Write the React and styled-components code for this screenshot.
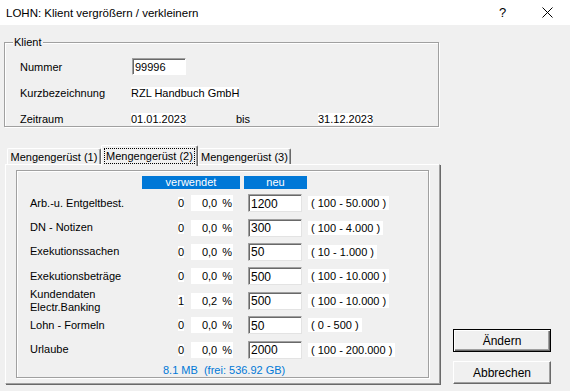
import React from "react";
import styled, { createGlobalStyle } from "styled-components";

const GlobalStyle = createGlobalStyle`
  html, body {
    margin: 0;
    padding: 0;
    background: #f0f0f0;
  }
  body {
    font-family: "Liberation Sans", Arial, sans-serif;
    font-size: 11px;
    color: #000;
  }
`;

const rows = [
  { label: "Arb.-u. Entgeltbest.", count: "0", pct: "0,0", neu: "1200", range: "( 100 - 50.000 )" },
  { label: "DN - Notizen", count: "0", pct: "0,0", neu: "300", range: "( 100 - 4.000 )" },
  { label: "Exekutionssachen", count: "0", pct: "0,0", neu: "50", range: "( 10 - 1.000 )" },
  { label: "Exekutionsbeträge", count: "0", pct: "0,0", neu: "500", range: "( 100 - 10.000 )" },
  { label: "Kundendaten\nElectr.Banking", count: "1", pct: "0,2", neu: "500", range: "( 100 - 10.000 )" },
  { label: "Lohn - Formeln", count: "0", pct: "0,0", neu: "50", range: "( 0 - 500 )" },
  { label: "Urlaube", count: "0", pct: "0,0", neu: "2000", range: "( 100 - 200.000 )" },
];

const App = () => {
  return (
    <Window>
      <GlobalStyle />
      <TitleBar>
        <Title>LOHN: Klient vergrößern / verkleinern</Title>
        <TitleButton>?</TitleButton>
        <TitleButton>
          <svg width="11" height="11" viewBox="0 0 11 11">
            <path d="M0.5 0.5 L10.5 10.5 M10.5 0.5 L0.5 10.5" stroke="#000" strokeWidth="1" />
          </svg>
        </TitleButton>
      </TitleBar>
      <Body>
        <LeftColumn>
          <Group>
            <Legend>Klient</Legend>
            <ClientGrid>
              <FieldLabel>Nummer</FieldLabel>
              <SmallInput defaultValue="99996" />
              <FieldLabel>Kurzbezeichnung</FieldLabel>
              <ValueCell $span={3}>
                <Highlight>RZL Handbuch GmbH</Highlight>
              </ValueCell>
              <FieldLabel>Zeitraum</FieldLabel>
              <ValueCell>
                <Highlight>01.01.2023</Highlight>
              </ValueCell>
              <ValueCell>bis</ValueCell>
              <ValueCell>
                <Highlight>31.12.2023</Highlight>
              </ValueCell>
            </ClientGrid>
          </Group>

          <Tabs>
            <TabStrip>
              <Tab $w={94}>Mengengerüst (1)</Tab>
              <Tab $w={97} $active>
                <Focus>Mengengerüst (2)</Focus>
              </Tab>
              <Tab $w={93}>Mengengerüst (3)</Tab>
            </TabStrip>
            <TabPanel>
              <InnerFrame>
                <HeaderRow>
                  <HeaderCell $w={98}>verwendet</HeaderCell>
                  <HeaderCell $w={63}>neu</HeaderCell>
                </HeaderRow>
                <DataGrid>
                  {rows.map((r) => (
                    <React.Fragment key={r.label}>
                      <RowLabel>{r.label}</RowLabel>
                      <CountCell>
                        <Highlight>{r.count}</Highlight>
                      </CountCell>
                      <PctBox>
                        <span>{r.pct}</span>
                        <Percent>%</Percent>
                      </PctBox>
                      <NewInput defaultValue={r.neu} />
                      <RangeCell>
                        <RangeText>{r.range}</RangeText>
                      </RangeCell>
                    </React.Fragment>
                  ))}
                </DataGrid>
                <Footer>8.1 MB&nbsp;&nbsp;(frei: 536.92 GB)</Footer>
              </InnerFrame>
            </TabPanel>
          </Tabs>
        </LeftColumn>

        <ButtonColumn>
          <Button $default>Ändern</Button>
          <Button>Abbrechen</Button>
        </ButtonColumn>
      </Body>
    </Window>
  );
};

const Window = styled.div`
  width: 570px;
  height: 391px;
  display: flex;
  flex-direction: column;
  background: #f0f0f0;
  overflow: hidden;
`;

const TitleBar = styled.div`
  height: 25px;
  flex-shrink: 0;
  background: #fff;
  display: flex;
  align-items: center;
  padding-left: 6px;
  font-size: 11.5px;
`;

const Title = styled.div`
  flex: 1;
`;

const TitleButton = styled.div`
  width: 45px;
  height: 25px;
  display: flex;
  align-items: center;
  justify-content: center;
  font-size: 13px;
`;

const Body = styled.div`
  flex: 1;
  display: flex;
  padding: 0 0 7px 4px;
`;

const LeftColumn = styled.div`
  width: 436px;
  display: flex;
  flex-direction: column;
`;

const Group = styled.div`
  position: relative;
  width: 435px;
  height: 85px;
  box-sizing: border-box;
  margin-top: 17px;
  padding: 15px 0 0 15px;
  border: 1px solid #a0a0a0;
  box-shadow: inset 1px 1px #fff, 1px 1px #fff;
`;

const Legend = styled.span`
  position: absolute;
  left: 8px;
  top: -7px;
  padding: 0 1px;
  line-height: 13px;
  background: #f0f0f0;
`;

const ClientGrid = styled.div`
  display: grid;
  grid-template-columns: 111px 105px 82px auto;
  grid-template-rows: 17px 17px 17px;
  row-gap: 9px;
  align-items: center;
`;

const FieldLabel = styled.div`
  grid-column: 1;
`;

const ValueCell = styled.div`
  grid-column: ${(p) => (p.$span ? `span ${p.$span}` : "auto")};
`;

const Highlight = styled.span`
  background: #fff;
`;

const SmallInput = styled.input`
  grid-column: 2;
  width: 54px;
  height: 17px;
  box-sizing: border-box;
  margin: 0 0 0 1px;
  padding: 0 2px;
  font: inherit;
  background: #fff;
  border: 1px solid;
  border-color: #a0a0a0 #fff #fff #a0a0a0;
  box-shadow: inset 1px 1px #696969;
  outline: none;
`;

const Tabs = styled.div`
  margin: 18px 0 0 1px;
  flex: 1;
  display: flex;
  flex-direction: column;
`;

const TabStrip = styled.div`
  height: 19px;
  display: flex;
  align-items: flex-end;
  padding-left: 2px;
  position: relative;
  z-index: 1;
`;

const Tab = styled.div`
  width: ${(p) => p.$w}px;
  height: ${(p) => (p.$active ? 21 : 16)}px;
  box-sizing: border-box;
  margin-bottom: ${(p) => (p.$active ? -2 : 0)}px;
  background: #f0f0f0;
  border-top: 1px solid #fff;
  border-left: 1px solid #fff;
  border-right: 1px solid #696969;
  box-shadow: inset -1px 0 #a0a0a0;
  border-radius: 2px 2px 0 0;
  display: flex;
  align-items: ${(p) => (p.$active ? "flex-start" : "center")};
  padding-top: ${(p) => (p.$active ? 2 : 0)}px;
  justify-content: center;
  white-space: nowrap;
`;

const Focus = styled.span`
  border: 1px dotted #000;
  padding: 0 1px;
  line-height: 14px;
`;

const TabPanel = styled.div`
  flex: 1;
  display: flex;
  box-sizing: border-box;
  width: 435px;
  padding: 5px 10px 5px 10px;
  border-top: 1px solid #fff;
  border-left: 1px solid #fff;
  border-right: 1px solid #a0a0a0;
  border-bottom: 1px solid #a0a0a0;
  box-shadow: 1px 1px #696969;
`;

const InnerFrame = styled.div`
  flex: 1;
  display: flex;
  flex-direction: column;
  border: 1px solid #a0a0a0;
  box-shadow: 1px 1px #fff, inset 1px 1px #fff;
  padding-top: 5px;
`;

const HeaderRow = styled.div`
  display: flex;
  gap: 4px;
  padding-left: 125px;
  height: 13px;
`;

const HeaderCell = styled.div`
  width: ${(p) => p.$w}px;
  background: #0078d7;
  color: #fff;
  text-align: center;
  line-height: 13px;
`;

const DataGrid = styled.div`
  display: grid;
  grid-template-columns: 140px 14px 43px 54px auto;
  grid-auto-rows: 24.4px;
  align-items: center;
  margin-top: 2px;
  padding-left: 13px;
`;

const RowLabel = styled.div`
  white-space: pre-line;
  line-height: 13px;
`;

const CountCell = styled.div`
  text-align: right;
`;

const PctBox = styled.div`
  margin-left: 7px;
  width: 42px;
  height: 16px;
  box-sizing: border-box;
  background: #fff;
  display: flex;
  align-items: center;
  justify-content: flex-end;
  padding-right: 1px;
`;

const Percent = styled.span`
  margin-left: 5px;
`;

const NewInput = styled.input`
  margin: 0 0 0 21px;
  width: 54px;
  height: 18px;
  box-sizing: border-box;
  padding: 1px 2px 0;
  font: inherit;
  font-size: 12px;
  background: #fff;
  border: 1px solid;
  border-color: #a0a0a0 #e3e3e3 #e3e3e3 #a0a0a0;
  box-shadow: inset 1px 1px #696969;
  outline: none;
`;

const RangeCell = styled.div`
  padding-left: 27px;
`;

const RangeText = styled.span`
  background: #fff;
  padding: 1px 3px;
  white-space: nowrap;
`;

const Footer = styled.div`
  padding-left: 146px;
  margin-top: 1px;
  color: #0078d7;
  line-height: 14px;
`;

const ButtonColumn = styled.div`
  display: flex;
  flex-direction: column;
  justify-content: flex-end;
  gap: 9px;
  margin-left: 13px;
`;

const Button = styled.button`
  width: 98px;
  height: 23px;
  box-sizing: border-box;
  margin: 0;
  padding: 0;
  font: inherit;
  font-size: 12px;
  color: #000;
  background: #f0f0f0;
  border: 1px solid ${(p) => (p.$default ? "#000" : "transparent")};
  box-shadow: inset 1px 1px #fff, inset -1px -1px #696969, inset -2px -2px #a0a0a0;
  ${(p) => (p.$default ? "" : "border-color: #fff #696969 #696969 #fff; box-shadow: inset -1px -1px #a0a0a0;")}
`;

export default App;
